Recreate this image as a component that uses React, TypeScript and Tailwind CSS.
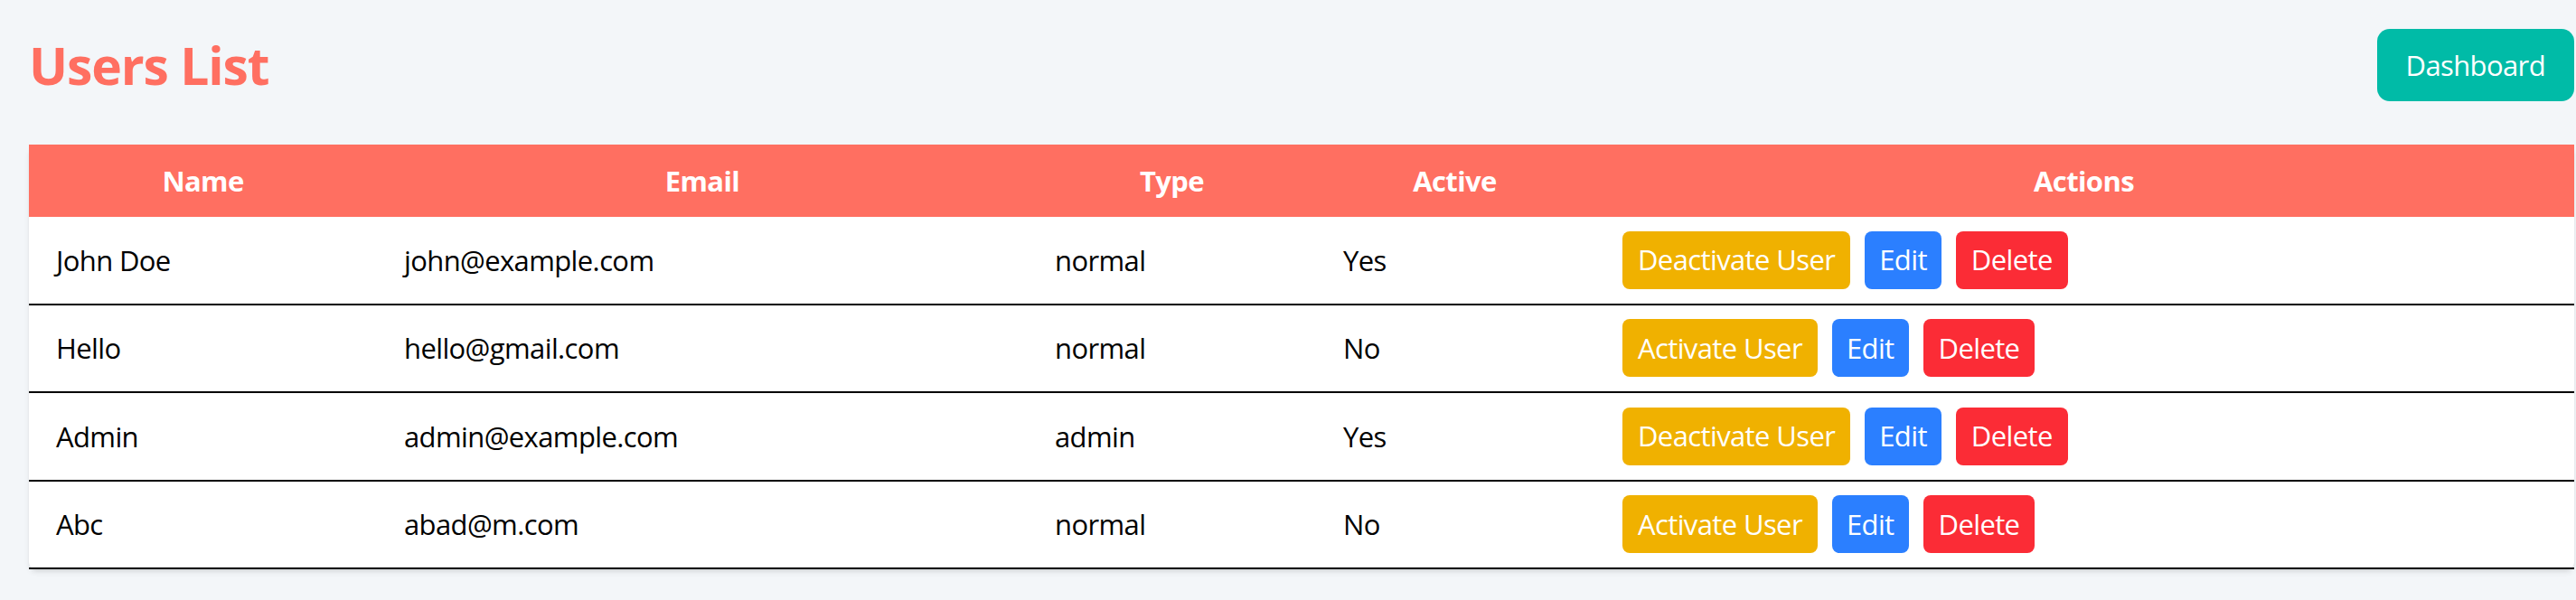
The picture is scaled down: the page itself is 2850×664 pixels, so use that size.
import React from "react";

type User = { name: string; email: string; type: string; active: boolean };

const users: User[] = [
  { name: "John Doe", email: "john@example.com", type: "normal", active: true },
  { name: "Hello", email: "hello@gmail.com", type: "normal", active: false },
  { name: "Admin", email: "admin@example.com", type: "admin", active: true },
  { name: "Abc", email: "abad@m.com", type: "normal", active: false },
];

export default function App() {
  return (
    <div
      className="min-h-screen bg-[#f3f6f9] pl-8 pr-[2px] pt-8 pb-[28px]"
      style={{ fontFamily: '"Open Sans", "Noto Sans", sans-serif' }}
    >
      <div className="flex h-[80px] items-center justify-between">
        <h1 className="text-[57px] font-bold leading-none tracking-[-0.02em] text-[#ff6f61]">
          Users List
        </h1>
        <button className="h-[80px] rounded-[14px] bg-teal-500 px-[32px] text-[31px] leading-none tracking-[-0.02em] text-white">
          Dashboard
        </button>
      </div>

      <div className="mt-12 rounded-lg bg-white shadow-md">
        <table className="w-full table-fixed border-separate border-spacing-0 text-[31px] tracking-[-0.02em] text-black">
          <colgroup>
            <col className="w-[385px]" />
            <col className="w-[720px]" />
            <col className="w-[319px]" />
            <col className="w-[307px]" />
            <col />
          </colgroup>
          <thead>
            <tr className="bg-[#ff6f61] text-white">
              <th className="h-[80px] text-center font-bold">Name</th>
              <th className="h-[80px] text-center font-bold">Email</th>
              <th className="h-[80px] text-center font-bold">Type</th>
              <th className="h-[80px] text-center font-bold">Active</th>
              <th className="h-[80px] text-center font-bold">Actions</th>
            </tr>
          </thead>
          <tbody>
            {users.map((u) => (
              <tr key={u.email}>
                <td className="h-[97.5px] border-b-2 border-black px-[30px] text-left">{u.name}</td>
                <td className="h-[97.5px] border-b-2 border-black px-[30px] text-left">{u.email}</td>
                <td className="h-[97.5px] border-b-2 border-black px-[30px] text-left">{u.type}</td>
                <td className="h-[97.5px] border-b-2 border-black px-[30px] text-left">
                  {u.active ? "Yes" : "No"}
                </td>
                <td className="h-[97.5px] border-b-2 border-black px-[32px] text-left">
                  <div className="flex items-center gap-4">
                    <button className="h-[64px] rounded-[8px] bg-yellow-500 px-[17px] leading-none text-white">
                      {u.active ? "Deactivate User" : "Activate User"}
                    </button>
                    <button className="h-[64px] rounded-[8px] bg-blue-500 px-[16px] leading-none text-white">
                      Edit
                    </button>
                    <button className="h-[64px] rounded-[8px] bg-red-500 px-[17px] leading-none text-white">
                      Delete
                    </button>
                  </div>
                </td>
              </tr>
            ))}
          </tbody>
        </table>
      </div>
    </div>
  );
}
